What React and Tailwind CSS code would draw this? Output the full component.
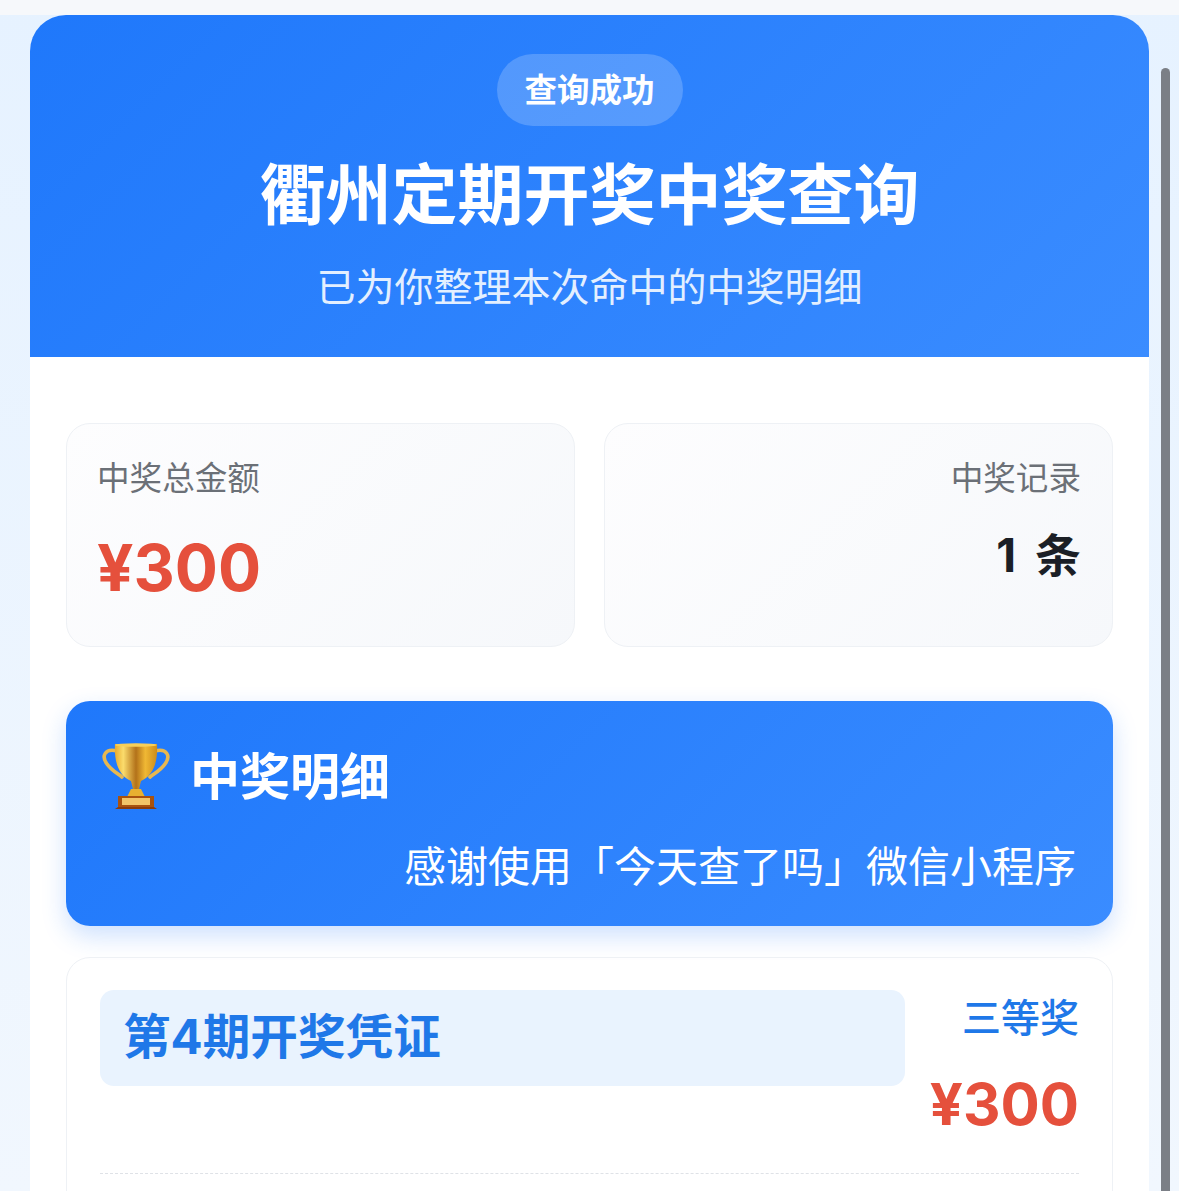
import React from "react";

const fontStack = "font-['Inter','Noto_Sans_CJK_SC',sans-serif]";

function Trophy() {
  return (
    <svg width="68" height="68" viewBox="0 0 68 68" className="shrink-0">
      <defs>
        <linearGradient id="cup" x1="0" y1="0" x2="1" y2="0">
          <stop offset="0" stopColor="#e8ab2e" />
          <stop offset="0.2" stopColor="#fbdc6c" />
          <stop offset="0.5" stopColor="#b3721a" />
          <stop offset="0.72" stopColor="#f0b834" />
          <stop offset="1" stopColor="#cc8c1c" />
        </linearGradient>
      </defs>
      <path d="M15 8 C3 5 -1 13 5 21 C9 27 15 30 20 34" fill="none" stroke="#e8b850" strokeWidth="3.6" strokeLinecap="round" />
      <path d="M53 8 C65 5 69 13 63 21 C59 27 53 30 48 34" fill="none" stroke="#e8b850" strokeWidth="3.6" strokeLinecap="round" />
      <path d="M13 1 H55 C56 18 52 32 39 38 L37 46 H31 L29 38 C16 32 12 18 13 1 Z" fill="url(#cup)" />
      <ellipse cx="34" cy="2" rx="21" ry="1.8" fill="#f8cf58" />
      <path d="M29 46 H39 L43 54 H25 Z" fill="#e8b030" />
      <rect x="16" y="53" width="36" height="11" fill="#a8520f" />
      <rect x="20" y="55" width="28" height="7" fill="#f2c468" />
      <path d="M16 64 H52 L55 66 H13 Z" fill="#8a3c0e" />
    </svg>
  );
}

function StatCard({ children, right }) {
  return (
    <div
      className={`flex-1 h-[224px] rounded-[24px] border border-[#eef1f5] bg-[linear-gradient(135deg,#fdfdfe,#f6f8fb)] px-[31px] pt-[32px] flex flex-col ${
        right ? "items-end" : "items-start"
      }`}
    >
      {children}
    </div>
  );
}

export default function App() {
  return (
    <div className={`${fontStack} relative h-[1191px] overflow-hidden bg-gradient-to-b from-[#e6f2ff] to-[#f1f7fe]`}>
      <div className="h-[15px] bg-[#f6f8fb]" />

      <div className="absolute right-[9px] top-[68px] bottom-0 w-[9px] rounded-t-full bg-[#7b7f86]" />

      <main className="mx-[30px] h-[1176px] rounded-t-[36px] bg-white overflow-hidden">
        <header className="h-[342px] bg-[linear-gradient(135deg,#1f78fb,#3a8cff)] flex flex-col items-center pt-[39px]">
          <div className="h-[72px] w-[186px] rounded-full bg-white/20 flex items-center justify-center pt-[2px] text-[32.5px] font-bold text-white">
            查询成功
          </div>
          <h1 className="mt-[27px] text-[66px] leading-[84px] font-bold text-white">衢州定期开奖中奖查询</h1>
          <p className="mt-[24px] text-[39px] leading-[52px] text-[#e3efff]">已为你整理本次命中的中奖明细</p>
        </header>

        <section className="px-[36px] pt-[66px]">
          <div className="flex gap-[29px]">
            <StatCard>
              <div className="text-[32.6px] leading-[44px] text-[#6b7077] -ml-[1px]">中奖总金额</div>
              <div className="mt-[30px] text-[64px] leading-[76px] font-bold text-[#e5503c] -ml-[1px]">¥300</div>
            </StatCard>
            <StatCard right>
              <div className="text-[32.6px] leading-[44px] text-[#6b7077]">中奖记录</div>
              <div className="mt-[22px] text-[46px] leading-[66px] font-bold text-[#1b1f26] [word-spacing:8px]">1 条</div>
            </StatCard>
          </div>

          <div className="mt-[54px] h-[225px] rounded-[24px] bg-[linear-gradient(135deg,#1f78fb,#3a8cff)] shadow-[0_10px_24px_rgba(31,120,251,0.22)] pl-[36px] pr-[37px] pt-[42px]">
            <div className="flex items-center gap-[20px]">
              <Trophy />
              <h2 className="text-[50px] leading-[68px] font-bold text-white">中奖明细</h2>
            </div>
            <p className="mt-[28px] text-right text-[42px] leading-[56px] text-white">感谢使用「今天查了吗」微信小程序</p>
          </div>

          <div className="mt-[31px] h-[300px] rounded-[24px] border border-[#eef1f5] px-[33px] pt-[32px]">
            <div className="flex justify-between gap-[25px]">
              <div className="flex-1 h-[96px] rounded-[14px] bg-[#e9f3fe] pl-[23px] pb-[2px] flex items-center text-[47.6px] font-bold text-[#1f78e8]">
                第4期开奖凭证
              </div>
              <div className="flex flex-col items-end">
                <div className="text-[39px] leading-[56px] font-medium text-[#1f78e8]">三等奖</div>
                <div className="mt-[20px] text-[58.2px] leading-[76px] font-bold text-[#e5503c]">¥300</div>
              </div>
            </div>
            <div className="mt-[31px] border-t border-dashed border-[#dfe2e7]" />
          </div>
        </section>
      </main>
    </div>
  );
}
